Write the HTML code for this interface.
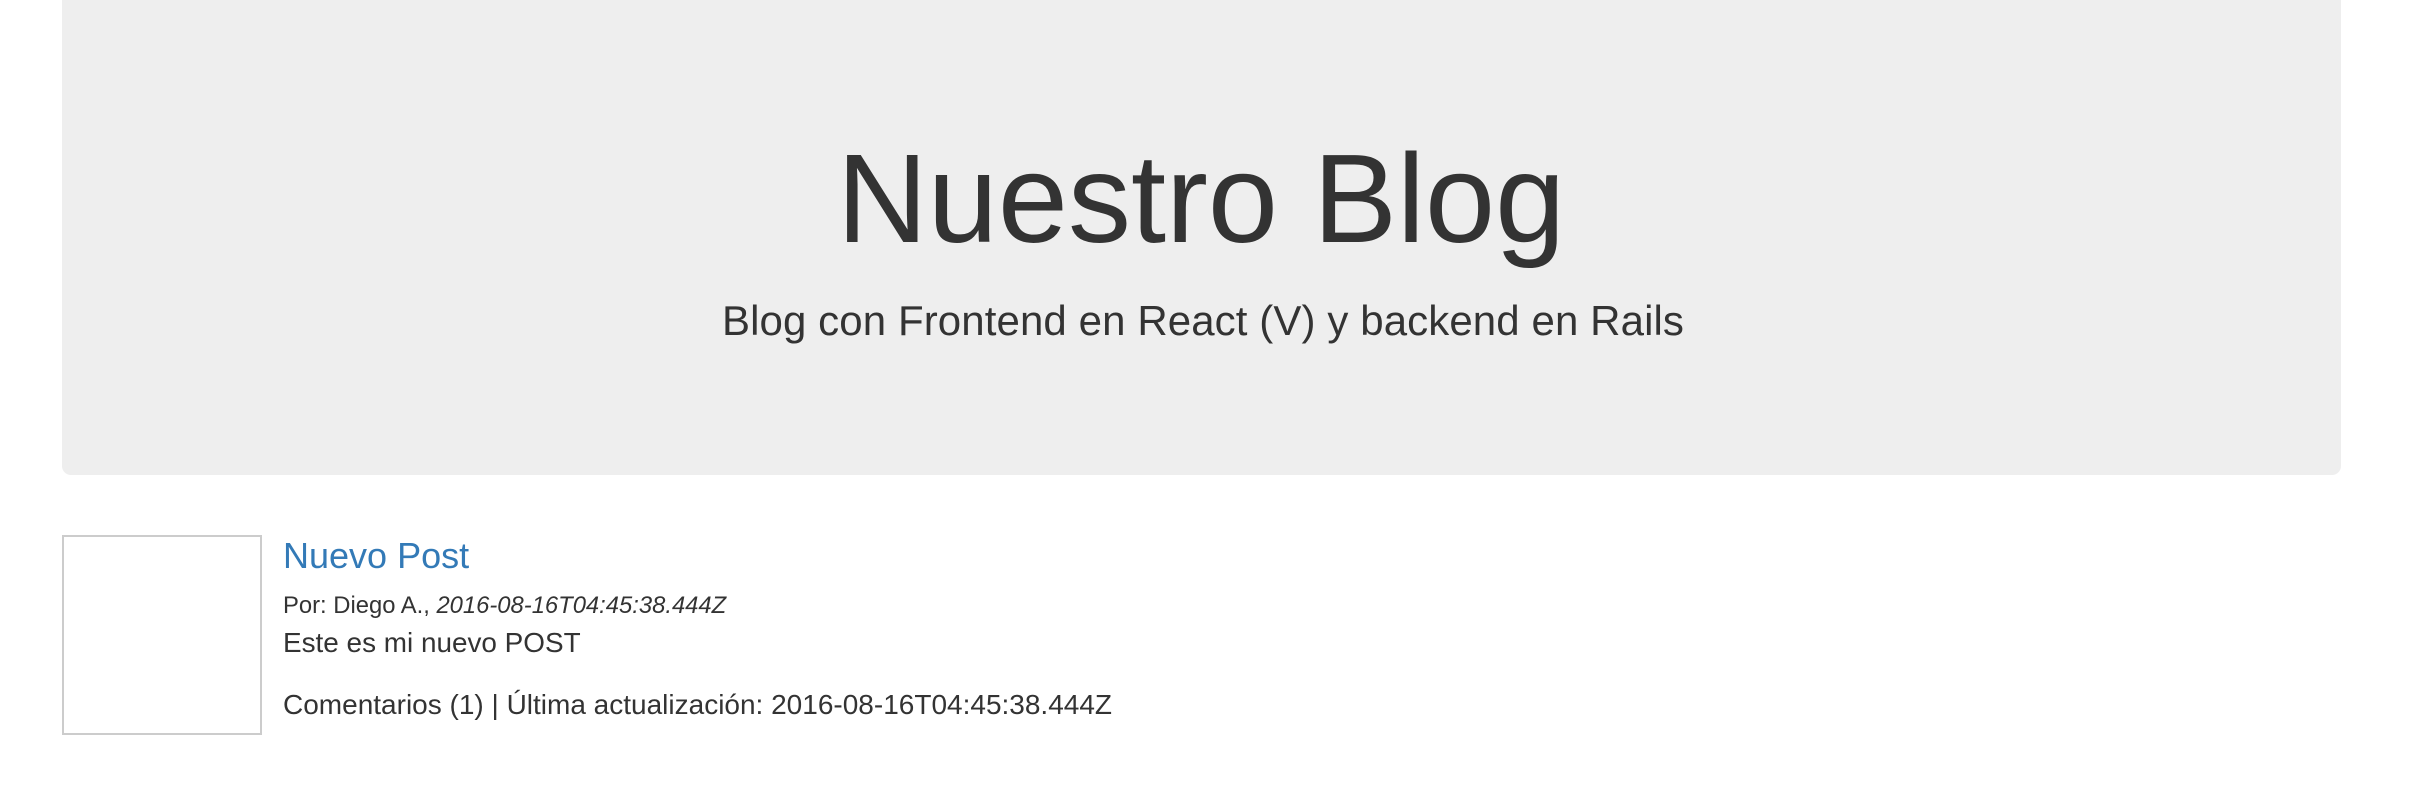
<!DOCTYPE html>
<html><head><meta charset="utf-8"><style>
html,body{margin:0;padding:0;background:#fff;width:2412px;height:786px;overflow:hidden;font-family:"Liberation Sans",Arial,sans-serif;color:#333}
.j{position:absolute;left:62px;top:-10px;width:2279px;height:485px;background:#eee;border-radius:9px}
.t{position:absolute;left:0;width:2412px;text-align:center;white-space:nowrap}
.a{position:absolute;left:283px;white-space:nowrap;line-height:1}
.box{position:absolute;left:62px;top:535px;width:196px;height:196px;border:2px solid #ccc;background:#fff}
</style></head><body>
<div class="j"></div>
<div class="t" style="top:136px;left:-5px;font-size:126px;line-height:1">Nuestro Blog</div>
<div class="t" style="top:300px;left:-3px;font-size:42px;line-height:1;letter-spacing:0.1px">Blog con Frontend en React (V) y backend en Rails</div>
<div class="box"></div>
<div class="a" style="top:538px;font-size:36px;color:#337ab7">Nuevo Post</div>
<div class="a" style="top:594px;font-size:23.8px">Por: Diego A., <i>2016-08-16T04:45:38.444Z</i></div>
<div class="a" style="top:629px;font-size:27.9px">Este es mi nuevo POST</div>
<div class="a" style="top:691px;font-size:28px">Comentarios (1) | Última actualización: 2016-08-16T04:45:38.444Z</div>
</body></html>
